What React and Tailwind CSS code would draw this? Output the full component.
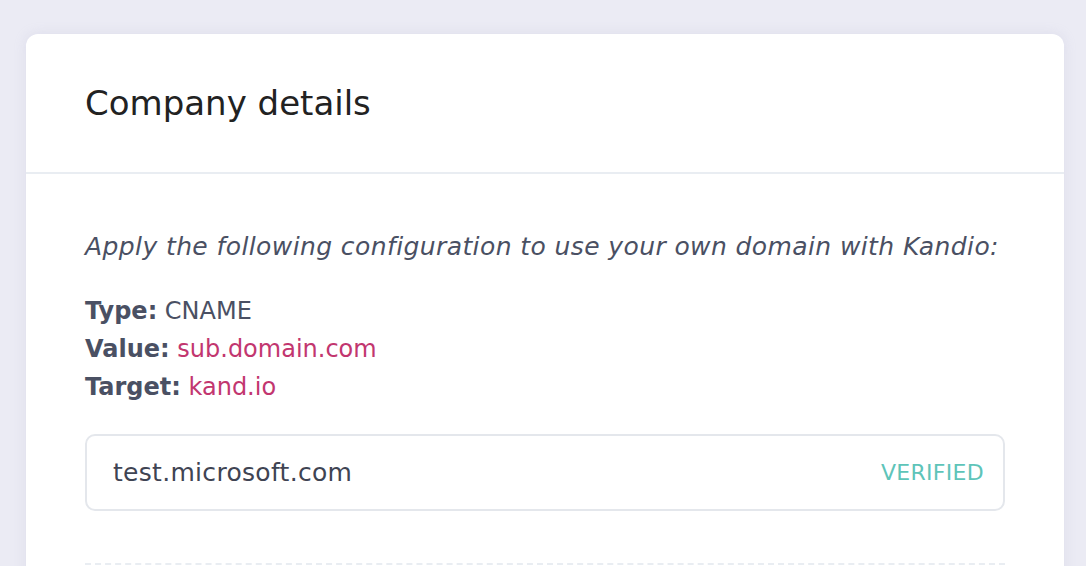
import React from "react";

const App = () => {
  return (
    <div
      className="bg-[#ebebf4] pl-[26px] pr-[22px] pt-[34px] overflow-hidden h-[566px]"
      style={{ fontFamily: '"DejaVu Sans", "Liberation Sans", sans-serif' }}
    >
      <div className="bg-white rounded-[12px] shadow-[0_0_12px_rgba(180,180,210,0.25)] h-[600px]">
        <div className="h-[140px] flex items-center px-[59px] border-b-2 border-[#e9edf2]">
          <h1 className="text-[34px] leading-[40px] text-[#222222] font-normal">Company details</h1>
        </div>

        <div className="px-[59px] pt-[58px]">
          <p className="italic text-[25px] tracking-[0.4px] text-[#4a5063] leading-[30px] whitespace-nowrap">
            Apply the following configuration to use your own domain with Kandio:
          </p>

          <div className="mt-[30px] text-[24px] leading-[38px] text-[#4a5063]">
            <div>
              <span className="font-bold">Type:</span> CNAME
            </div>
            <div>
              <span className="font-bold">Value:</span>{" "}
              <span className="text-[#c2366f]">sub.domain.com</span>
            </div>
            <div>
              <span className="font-bold">Target:</span>{" "}
              <span className="text-[#c2366f]">kand.io</span>
            </div>
          </div>

          <div className="mt-[28px] h-[77px] rounded-[10px] border-2 border-[#e4e7ec] flex items-center justify-between pl-[26px] pr-[19px]">
            <span className="text-[25px] tracking-[0.3px] text-[#3f4453]">test.microsoft.com</span>
            <span className="text-[22px] tracking-[0.3px] text-[#5ec4b9]">VERIFIED</span>
          </div>

          <div className="mt-[52px] border-t-2 border-dashed border-[#e9edf2]" />
        </div>
      </div>
    </div>
  );
};

export default App;
